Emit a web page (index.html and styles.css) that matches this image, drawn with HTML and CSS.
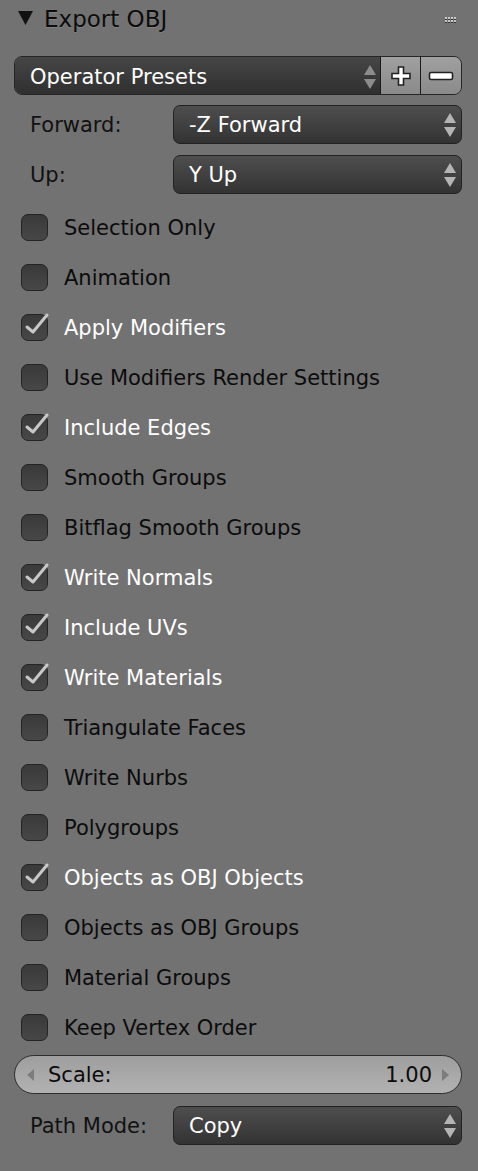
FILE: index.html
```html
<!DOCTYPE html>
<html lang="en">
<head>
<meta charset="utf-8">
<title>Export OBJ</title>
<link rel="stylesheet" href="styles.css">
</head>
<body>
<div class="panel">
    <div class="header">
        <svg class="collapse" width="15" height="14" viewBox="0 0 15 14"><polygon points="0,0 15,0 7.5,14" fill="#111"/></svg>
        <span class="title">Export OBJ</span>
        <span class="grip"><i></i><i></i><i></i><i></i><i></i><i></i><i></i><i></i></span>
    </div>

    <div class="presets">
        <div class="menu dark">
            <span>Operator Presets</span>
            <span class="updown dim"><b class="up"></b><b class="down"></b></span>
        </div>
        <div class="tool">
            <svg width="24" height="24" viewBox="0 0 24 24"><path d="M9.5 3h5v6.5h6.5v5h-6.5v6.5h-5v-6.5h-6.5v-5h6.5z" fill="#fff" stroke="#222" stroke-width="1.6"/></svg>
        </div>
        <div class="tool">
            <svg width="26" height="12" viewBox="0 0 26 12"><rect x="1.5" y="2.5" width="23" height="7" rx="1.5" fill="#fff" stroke="#222" stroke-width="1.6"/></svg>
        </div>
    </div>

    <div class="prop first">
        <span class="label">Forward:</span>
        <div class="menu">
            <span>-Z Forward</span>
            <span class="updown"><b class="up"></b><b class="down"></b></span>
        </div>
    </div>
    <div class="prop second">
        <span class="label">Up:</span>
        <div class="menu">
            <span>Y Up</span>
            <span class="updown"><b class="up"></b><b class="down"></b></span>
        </div>
    </div>

    <ul class="checks">
        <li><span class="box"></span>Selection Only</li>
        <li><span class="box"></span>Animation</li>
        <li class="on"><span class="box"><svg viewBox="0 0 27 27"><polyline points="6,13 12,18 26,1"/></svg></span>Apply Modifiers</li>
        <li><span class="box"></span>Use Modifiers Render Settings</li>
        <li class="on"><span class="box"><svg viewBox="0 0 27 27"><polyline points="6,13 12,18 26,1"/></svg></span>Include Edges</li>
        <li><span class="box"></span>Smooth Groups</li>
        <li><span class="box"></span>Bitflag Smooth Groups</li>
        <li class="on"><span class="box"><svg viewBox="0 0 27 27"><polyline points="6,13 12,18 26,1"/></svg></span>Write Normals</li>
        <li class="on"><span class="box"><svg viewBox="0 0 27 27"><polyline points="6,13 12,18 26,1"/></svg></span>Include UVs</li>
        <li class="on"><span class="box"><svg viewBox="0 0 27 27"><polyline points="6,13 12,18 26,1"/></svg></span>Write Materials</li>
        <li><span class="box"></span>Triangulate Faces</li>
        <li><span class="box"></span>Write Nurbs</li>
        <li><span class="box"></span>Polygroups</li>
        <li class="on"><span class="box"><svg viewBox="0 0 27 27"><polyline points="6,13 12,18 26,1"/></svg></span>Objects as OBJ Objects</li>
        <li><span class="box"></span>Objects as OBJ Groups</li>
        <li><span class="box"></span>Material Groups</li>
        <li><span class="box"></span>Keep Vertex Order</li>
    </ul>

    <div class="slider">
        <b class="arrow left"></b>
        <span class="name">Scale:</span>
        <span class="value">1.00</span>
        <b class="arrow right"></b>
    </div>

    <div class="prop last">
        <span class="label">Path Mode:</span>
        <div class="menu">
            <span>Copy</span>
            <span class="updown"><b class="up"></b><b class="down"></b></span>
        </div>
    </div>
</div>
</body>
</html>
```

FILE: styles.css
```css
html {
    height: 100%;
    margin: 0;
    padding: 0;
}

body {
    margin: 0;
    background: #727272;
    font-family: "DejaVu Sans", sans-serif;
    font-size: 21px;
    color: #000;
}

.panel {
    padding: 0 16px 0 14px;
}

.header {
    height: 38px;
    display: flex;
    align-items: center;
    padding-left: 4px;
}

.collapse {
    margin-top: -2px;
}

.title {
    margin-left: 11px;
    font-size: 23px;
    color: #0c0c0c;
    text-shadow: 0 1px 0 rgba(255, 255, 255, .12);
}

.grip {
    margin-left: auto;
    margin-right: 6px;
    display: grid;
    grid-template-columns: repeat(4, 2px);
    grid-gap: 1px;
}

.grip i {
    width: 2px;
    height: 2px;
    background: #c8c8c8;
    box-shadow: 0 1px 0 #333;
}

.presets {
    margin-top: 18px;
    height: 39px;
    display: flex;
    border: 1px solid #262626;
    border-radius: 8px;
    overflow: hidden;
    box-sizing: border-box;
}

.menu {
    flex: 1;
    display: flex;
    align-items: center;
    box-sizing: border-box;
    height: 39px;
    padding: 1px 5px 0 15px;
    color: #fff;
    background: linear-gradient(#4e4e4e, #333);
    border: 1px solid #222;
    border-radius: 7px;
}

.presets .menu {
    border: none;
    border-radius: 0;
    padding-left: 15px;
    padding-right: 4px;
    background: linear-gradient(#464646, #2e2e2e);
}

.tool {
    width: 39px;
    display: flex;
    align-items: center;
    justify-content: center;
    background: linear-gradient(#a0a0a0, #8a8a8a);
    border-left: 1px solid #1a1a1a;
}

.tool:last-child {
    width: 40px;
}

.updown {
    margin-left: auto;
    display: flex;
    flex-direction: column;
    gap: 4px;
}

.updown b {
    display: block;
    width: 0;
    height: 0;
    border-left: 6px solid transparent;
    border-right: 6px solid transparent;
}

.updown .up {
    border-bottom: 10px solid #b4b4b4;
}

.updown .down {
    border-top: 10px solid #b4b4b4;
}

.updown.dim .up {
    border-bottom-color: #8c8c8c;
}

.updown.dim .down {
    border-top-color: #8c8c8c;
}

.prop {
    display: flex;
    align-items: center;
}

.prop .label {
    width: 159px;
    padding-left: 16px;
    padding-top: 1px;
    box-sizing: border-box;
    color: #111;
}

.prop.first {
    margin-top: 10px;
}

.prop.second {
    margin-top: 11px;
}

.prop.last {
    margin-top: 12px;
}

.checks {
    list-style: none;
    margin: 8px 0 0;
    padding: 0;
}

.checks li {
    height: 50px;
    display: flex;
    align-items: center;
    color: #0c0c0c;
}

.checks li.on {
    color: #fff;
}

.box {
    width: 27px;
    height: 27px;
    margin: 0 16px 0 7px;
    box-sizing: border-box;
    border: 1px solid #242424;
    border-radius: 7px;
    background: linear-gradient(#3a3a3a, #474747);
    position: relative;
    top: -1px;
}

.box svg {
    position: absolute;
    left: -1px;
    top: -1px;
    width: 27px;
    height: 27px;
    overflow: visible;
}

.box polyline {
    fill: none;
    stroke: #c8c8c8;
    stroke-width: 3;
    stroke-linecap: round;
    stroke-linejoin: round;
}

.checks li {
    padding-top: 2px;
    box-sizing: border-box;
}

.slider {
    margin-top: 3px;
    height: 39px;
    box-sizing: border-box;
    display: flex;
    align-items: center;
    padding: 1px 12px 0;
    border: 1px solid #2e2e2e;
    border-radius: 20px;
    background: linear-gradient(#9e9e9e, #b2b2b2);
    color: #0c0c0c;
}

.slider .name {
    margin-left: 14px;
}

.slider .value {
    margin-left: auto;
    margin-right: 10px;
}

.arrow {
    display: block;
    width: 0;
    height: 0;
    border-top: 6px solid transparent;
    border-bottom: 6px solid transparent;
}

.arrow.left {
    border-right: 7px solid #7c7c7c;
}

.arrow.right {
    border-left: 7px solid #7c7c7c;
}
```
